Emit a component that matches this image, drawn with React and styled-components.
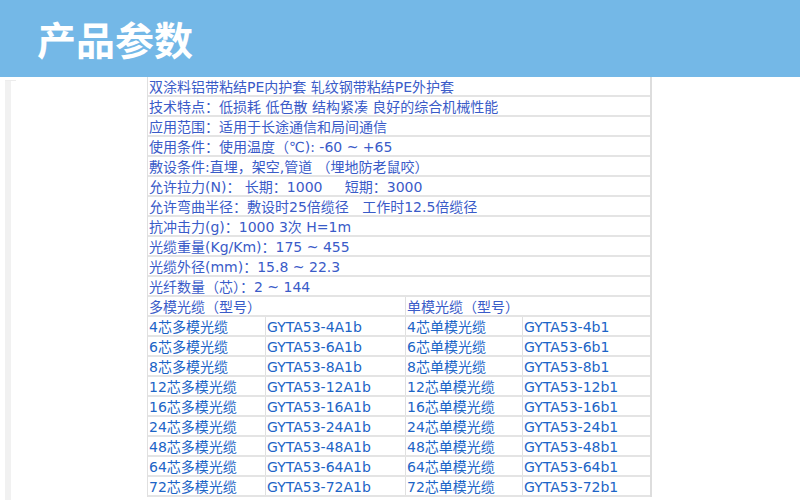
import styled, { createGlobalStyle } from 'styled-components'

const GlobalStyle = createGlobalStyle`
  html, body {
    margin: 0;
    padding: 0;
    background: #ffffff;
  }
  body {
    font-family: "DejaVu Sans", "Noto Sans CJK SC", sans-serif;
  }
`

const Header = styled.header`
  height: 77px;
  background-color: #74b8e7;
  display: flex;
  align-items: center;
  padding-left: 37px;
`

const Title = styled.h1`
  margin: 0;
  color: #ffffff;
  font-family: "Noto Sans CJK SC", sans-serif;
  font-size: 39px;
  font-weight: 700;
  line-height: 1;
  padding-bottom: 1px;
`

const Body = styled.div`
  display: flex;
  align-items: flex-start;
`

const SideStrip = styled.div`
  margin: 3px 0 0 5px;
  width: 6px;
  height: 420px;
  background: #f1f1f1;
  border-top: 1px solid #ececec;
  position: relative;

  &::after {
    content: '';
    position: absolute;
    top: -1px;
    left: 6px;
    width: 5px;
    height: 1px;
    background: #ececec;
  }
`

const Table = styled.div`
  margin-left: 136px;
  width: 502px;
  border-left: 1px solid #e0e0e0;
  border-right: 2px solid #dddddd;
`

const Row = styled.div`
  display: grid;
  grid-template-columns: ${p => p.$cols || '1fr'};
  height: 20px;
  border-bottom: 2px solid #e4e4e4;
  box-sizing: border-box;
`

const Cell = styled.div`
  padding-left: 1px;
  font-size: 14px;
  line-height: 20px;
  color: ${p => (p.$model ? '#1c64c6' : '#3a5bc8')};
  white-space: pre;
  overflow: hidden;
  border-left: ${p => (p.$divider ? '1px solid #e0e0e0' : 'none')};
`

const specs = [
  '双涂料铝带粘结PE内护套 轧纹钢带粘结PE外护套',
  '技术特点：低损耗 低色散 结构紧凑 良好的综合机械性能',
  '应用范围：适用于长途通信和局间通信',
  '使用条件：使用温度（℃): -60 ~ +65',
  '敷设条件:直埋，架空,管道 （埋地防老鼠咬）',
  '允许拉力(N)： 长期：1000     短期：3000',
  '允许弯曲半径：敷设时25倍缆径   工作时12.5倍缆径',
  '抗冲击力(g)：1000 3次 H=1m',
  '光缆重量(Kg/Km)：175 ~ 455',
  '光缆外径(mm)：15.8 ~ 22.3',
  '光纤数量（芯）：2 ~ 144',
]

const cores = [4, 6, 8, 12, 16, 24, 48, 64, 72]

const FOUR = '117px 140px 117px 1fr'
const TWO = '257px 1fr'

export default function App() {
  return (
    <>
      <GlobalStyle />
      <Header>
        <Title>产品参数</Title>
      </Header>
      <Body>
        <SideStrip />
        <Table>
          {specs.map(text => (
            <Row key={text}>
              <Cell>{text}</Cell>
            </Row>
          ))}
          <Row $cols={TWO}>
            <Cell>多模光缆（型号）</Cell>
            <Cell $divider>单模光缆（型号）</Cell>
          </Row>
          {cores.map(n => (
            <Row key={n} $cols={FOUR}>
              <Cell $model>{n}芯多模光缆</Cell>
              <Cell $model $divider>GYTA53-{n}A1b</Cell>
              <Cell $model $divider>{n}芯单模光缆</Cell>
              <Cell $model $divider>GYTA53-{n}b1</Cell>
            </Row>
          ))}
        </Table>
      </Body>
    </>
  )
}
